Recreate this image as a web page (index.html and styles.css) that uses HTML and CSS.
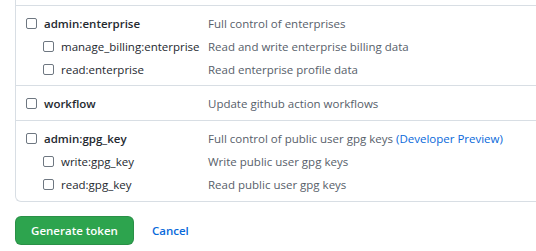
FILE: index.html
```html
<!DOCTYPE html>
<html lang="en">
<head>
  <meta charset="UTF-8">
  <title>New personal access token</title>
  <link rel="stylesheet" href="styles.css">
</head>
<body>
  <div class="scopes">
    <div class="group group-top"></div>

    <div class="group">
      <label class="row">
        <span class="name"><input type="checkbox"> <b>admin:enterprise</b></span>
        <span class="desc">Full control of enterprises</span>
      </label>
      <label class="row sub">
        <span class="name"><input type="checkbox"> manage_billing:enterprise</span>
        <span class="desc">Read and write enterprise billing data</span>
      </label>
      <label class="row sub">
        <span class="name"><input type="checkbox"> read:enterprise</span>
        <span class="desc">Read enterprise profile data</span>
      </label>
    </div>

    <div class="group">
      <label class="row">
        <span class="name"><input type="checkbox"> <b>workflow</b></span>
        <span class="desc">Update github action workflows</span>
      </label>
    </div>

    <div class="group">
      <label class="row">
        <span class="name"><input type="checkbox"> <b>admin:gpg_key</b></span>
        <span class="desc">Full control of public user gpg keys <a href="#">(Developer Preview)</a></span>
      </label>
      <label class="row sub">
        <span class="name"><input type="checkbox"> write:gpg_key</span>
        <span class="desc">Write public user gpg keys</span>
      </label>
      <label class="row sub">
        <span class="name"><input type="checkbox"> read:gpg_key</span>
        <span class="desc">Read public user gpg keys</span>
      </label>
    </div>
  </div>

  <div class="actions">
    <button class="btn-primary">Generate token</button>
    <a href="#" class="cancel">Cancel</a>
  </div>
</body>
</html>
```

FILE: styles.css
```css
body {
  margin: 0;
  padding: 0 0 0 15px;
  font-family: "Open Sans", "Noto Sans", sans-serif;
  font-size: 11.5px;
  color: #24292f;
  background: #fff;
}

.scopes {
  border: 1px solid #d8dee4;
  border-top: none;
  border-right: none;
  border-radius: 0 0 0 6px;
}

.group {
  padding: 6px 0 5px;
  border-top: 1px solid #d8dee4;
}

.group-top {
  height: 5px;
  padding: 0;
  border-top: none;
}

.group:nth-child(2) {
  padding-bottom: 4px;
}

.row {
  display: flex;
  align-items: center;
  height: 23px;
  padding-left: 10px;
}

.row.sub {
  padding-left: 27px;
}

.name {
  display: flex;
  align-items: center;
  gap: 7px;
  width: 182px;
}

.row.sub .name {
  width: 165px;
}

.name b {
  font-weight: 600;
}

.desc {
  color: #57606a;
}

.desc a {
  color: #0969da;
  text-decoration: none;
}

input[type="checkbox"] {
  appearance: none;
  margin: 0;
  width: 11px;
  height: 11px;
  border: 1px solid #6e7781;
  border-radius: 2px;
  background: #fff;
  flex: none;
}

.actions {
  display: flex;
  align-items: center;
  gap: 18px;
  margin-top: 14px;
}

.btn-primary {
  font-family: inherit;
  font-size: 11.5px;
  font-weight: 600;
  color: #fff;
  background-color: #2da44e;
  border: 1px solid rgba(27, 31, 36, 0.15);
  border-radius: 6px;
  width: 119px;
  height: 29px;
  padding: 0;
  cursor: pointer;
}

.cancel {
  color: #0969da;
  text-decoration: none;
  font-weight: 600;
  font-size: 11.5px;
}
```
